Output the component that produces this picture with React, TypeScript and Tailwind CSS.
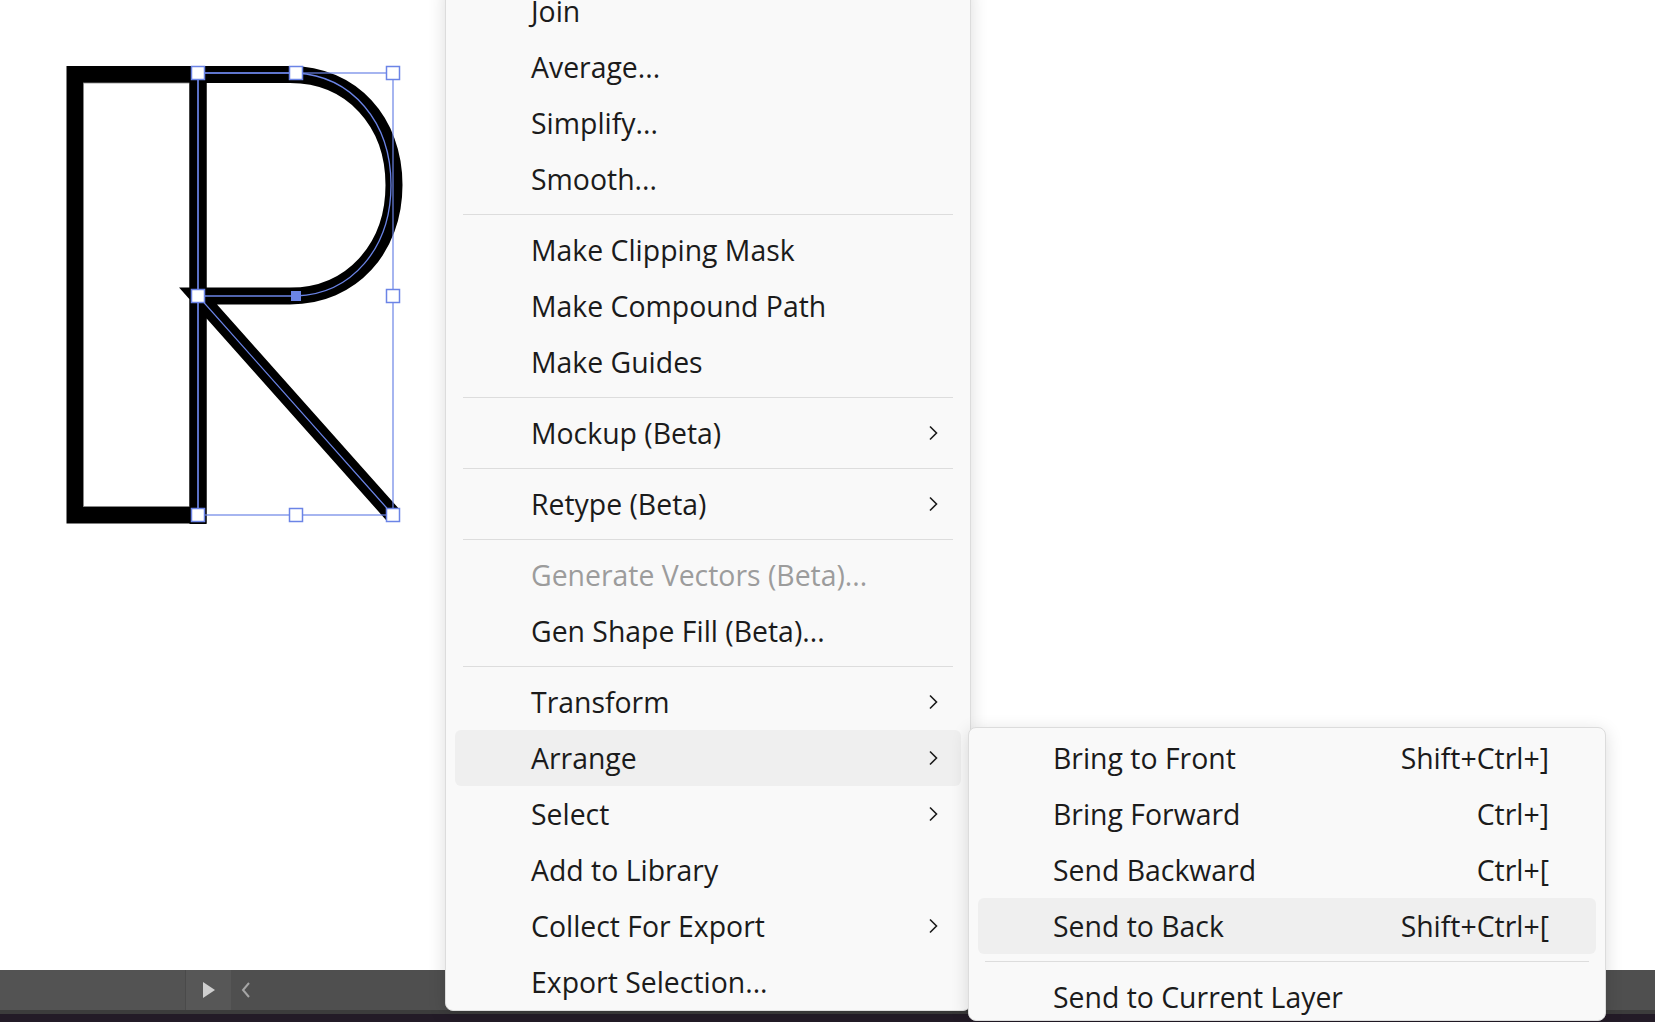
import React from "react";

type Item =
  | { kind: "item"; label: string; sub?: boolean; disabled?: boolean; active?: boolean }
  | { kind: "sep" };

const mainItems: Item[] = [
  { kind: "item", label: "Join" },
  { kind: "item", label: "Average..." },
  { kind: "item", label: "Simplify..." },
  { kind: "item", label: "Smooth..." },
  { kind: "sep" },
  { kind: "item", label: "Make Clipping Mask" },
  { kind: "item", label: "Make Compound Path" },
  { kind: "item", label: "Make Guides" },
  { kind: "sep" },
  { kind: "item", label: "Mockup (Beta)", sub: true },
  { kind: "sep" },
  { kind: "item", label: "Retype (Beta)", sub: true },
  { kind: "sep" },
  { kind: "item", label: "Generate Vectors (Beta)...", disabled: true },
  { kind: "item", label: "Gen Shape Fill (Beta)..." },
  { kind: "sep" },
  { kind: "item", label: "Transform", sub: true },
  { kind: "item", label: "Arrange", sub: true, active: true },
  { kind: "item", label: "Select", sub: true },
  { kind: "item", label: "Add to Library" },
  { kind: "item", label: "Collect For Export", sub: true },
  { kind: "item", label: "Export Selection..." },
];

const subItems: { label: string; shortcut?: string; active?: boolean; sep?: boolean }[] = [
  { label: "Bring to Front", shortcut: "Shift+Ctrl+]" },
  { label: "Bring Forward", shortcut: "Ctrl+]" },
  { label: "Send Backward", shortcut: "Ctrl+[" },
  { label: "Send to Back", shortcut: "Shift+Ctrl+[", active: true },
  { label: "", sep: true },
  { label: "Send to Current Layer" },
];

function Chevron() {
  return (
    <svg width="10" height="16" viewBox="0 0 10 16" className="shrink-0">
      <path d="M2 1.5 L8.5 8 L2 14.5" fill="none" stroke="#1b1b1b" strokeWidth="1.6" />
    </svg>
  );
}

function Handle({ x, y }: { x: number; y: number }) {
  return <rect x={x - 6.5} y={y - 6.5} width="13" height="13" fill="#ffffff" stroke="#6b84e6" strokeWidth="1.5" />;
}

export default function App() {
  const blue = "#6b84e6";
  return (
    <div
      className="relative w-[1655px] h-[1022px] overflow-hidden bg-white"
      style={{ fontFamily: '"Open Sans", "Noto Sans", sans-serif' }}
    >
      <div className="flex flex-col h-full">
        {/* canvas */}
        <div className="flex-1 bg-white">
          <svg width="1655" height="970" className="block">
            {/* left rectangle (thick stroke) */}
            <rect x="75" y="74.5" width="123" height="440.5" fill="none" stroke="#000" strokeWidth="17" />
            <rect x="83.5" y="83" width="106" height="423.5" fill="none" stroke="#8a8a8a" strokeWidth="0.8" />
            {/* R letter */}
            <path
              d="M198 524 L198 74.5 L290 74.5 C 352 74.5 394 122 394 185 C 394 248 352 296 290 296 L198 296 L393 515"
              fill="none"
              stroke="#000"
              strokeWidth="17"
              strokeLinejoin="miter"
              strokeMiterlimit="4"
            />
            {/* selected path */}
            <path
              d="M198 515 L198 73 L296 73 C 352 76 391 122 391 185 C 391 248 352 294 296 296 L198 296 L393 515"
              fill="none"
              stroke={blue}
              strokeWidth="1.3"
            />
            {/* bounding box */}
            <rect x="198" y="73" width="195" height="442" fill="none" stroke={blue} strokeWidth="1.2" />
            <Handle x={198} y={73} />
            <Handle x={296} y={73} />
            <Handle x={393} y={73} />
            <Handle x={198} y={296} />
            <Handle x={393} y={296} />
            <Handle x={198} y={515} />
            <Handle x={296} y={515} />
            <Handle x={393} y={515} />
            <rect x="291" y="291" width="10" height="10" fill={blue} />
          </svg>
        </div>
        {/* bottom bar */}
        <div className="h-[40px] bg-[#4f4f4f] flex items-stretch">
          <div className="w-[185px] bg-[#535353]" />
          <div className="w-[46px] bg-[#575757] border-l border-[#4a4a4a] flex items-center justify-center">
            <svg width="14" height="18" viewBox="0 0 14 18">
              <path d="M1 1 L13 9 L1 17 Z" fill="#cfcfcf" />
            </svg>
          </div>
          <div className="w-[30px] flex items-center justify-center">
            <svg width="12" height="18" viewBox="0 0 12 18">
              <path d="M9 2 L3 9 L9 16" fill="none" stroke="#a5a5a5" strokeWidth="2" />
            </svg>
          </div>
        </div>
        <div className="h-[4px] bg-[#3c3c3c]" />
        <div className="h-[8px] bg-[#231b27]" />
      </div>

      {/* main context menu */}
      <div className="absolute left-[445px] top-[-18px] w-[526px] bg-[#f9f9f9] border border-[#dcdcdc] rounded-[8px] shadow-[0_4px_18px_rgba(0,0,0,0.14)] flex flex-col text-[28.4px] text-[#1b1b1b]">
        {mainItems.map((it, i) =>
          it.kind === "sep" ? (
            <div key={i} className="h-[15px] flex items-center px-[17px]">
              <div className="h-px w-full bg-[#dddddd]" />
            </div>
          ) : (
            <div
              key={i}
              className={
                "h-[56px] mx-[9px] rounded-[6px] flex items-center pl-[76px] pr-[23px] leading-none " +
                (it.active ? "bg-[#efefef] " : "") +
                (it.disabled ? "text-[#9c9c9c]" : "")
              }
            >
              <span className="whitespace-nowrap">{it.label}</span>
              {it.sub ? (
                <span className="ml-auto flex items-center">
                  <Chevron />
                </span>
              ) : null}
            </div>
          )
        )}
      </div>

      {/* submenu */}
      <div className="absolute left-[968px] top-[727px] w-[638px] h-[294px] overflow-hidden bg-[#f9f9f9] border border-[#dcdcdc] rounded-[8px] shadow-[0_4px_18px_rgba(0,0,0,0.14)] pt-[2px] flex flex-col text-[28.4px] text-[#1b1b1b]">
        {subItems.map((it, i) =>
          it.sep ? (
            <div key={i} className="h-[15px] shrink-0 flex items-center px-[16px]">
              <div className="h-px w-full bg-[#dddddd]" />
            </div>
          ) : (
            <div
              key={i}
              className={
                "h-[56px] shrink-0 mx-[9px] rounded-[6px] flex items-center pl-[75px] pr-[47px] leading-none " +
                (it.active ? "bg-[#efefef]" : "")
              }
            >
              <span className="whitespace-nowrap">{it.label}</span>
              {it.shortcut ? <span className="ml-auto whitespace-nowrap">{it.shortcut}</span> : null}
            </div>
          )
        )}
      </div>
    </div>
  );
}
